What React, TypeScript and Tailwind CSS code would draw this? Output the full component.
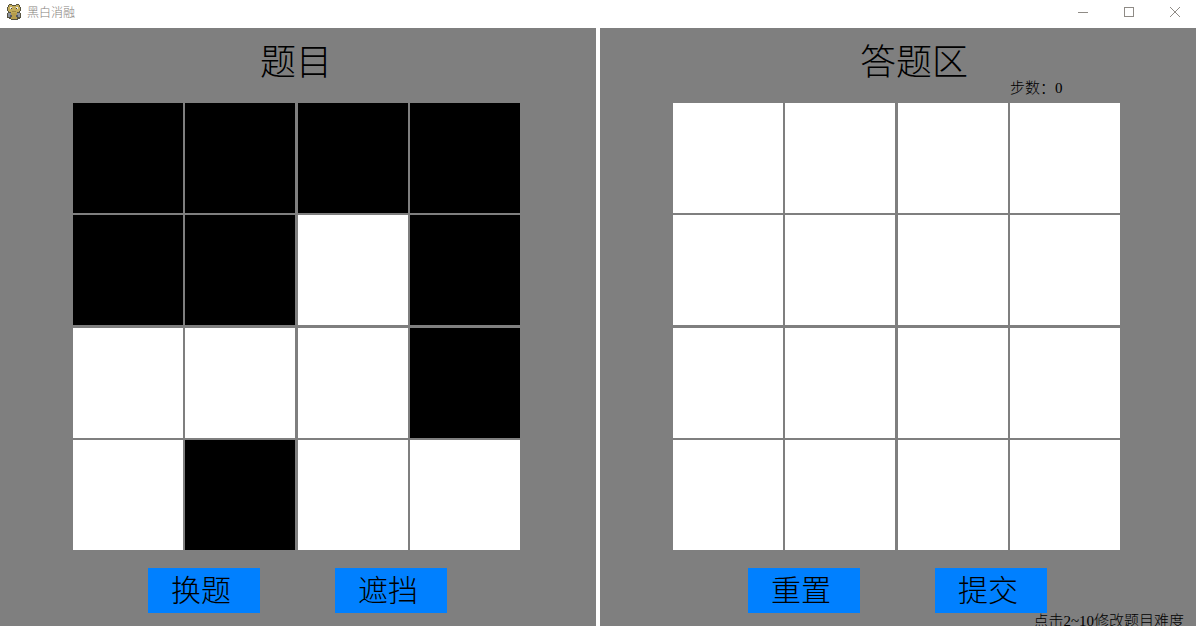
import { useState, type ReactNode } from "react";

const PUZZLE = ["1111", "1101", "0001", "0100"];
const BLANK = ["0000", "0000", "0000", "0000"];

function SnakeIcon() {
  return (
    <svg width="16" height="18" viewBox="0 0 16 18" shapeRendering="crispEdges" aria-hidden="true">
      <path d="M3 1h3v1h4V1h3v1h1v2h1v4h-1v2h1v5h-1v1h-2v1H5v-1H3v-1H1v-5h1V8H1V4h1V2h1z" fill="#56533f" />
      <path d="M3 2h3v1h4V2h3v2h1v4h-1v1h-2v1H5V9H3V8H2V4h1z" fill="#c2ab5a" />
      <path d="M5 10h6v6H5z" fill="#b59c4c" />
      <path d="M4 4h2v2H4zM10 4h2v2h-2z" fill="#ecebe6" />
      <path d="M5 5h1v1H5zM10 5h1v1h-1z" fill="#45413a" />
      <path d="M2 10h3v4H2zM11 10h3v4h-3z" fill="#8d939d" />
      <path d="M4 12h2v2H4zM10 12h2v2h-2z" fill="#555962" />
      <path d="M6 8h4v1H6z" fill="#9d8740" />
    </svg>
  );
}

function TitleBar() {
  return (
    <header className="flex h-7 shrink-0 items-start justify-between bg-white font-['Noto_Sans_CJK_SC',sans-serif]">
      <div className="flex h-6 items-center gap-[5px] pl-1.5">
        <SnakeIcon />
        <h1 className="text-xs leading-5 text-[#85817c]">黑白消融</h1>
      </div>
      <div className="flex h-6 items-center gap-9 pr-4 text-[#8f8b86]">
        <button type="button" aria-label="最小化">
          <svg width="10" height="10" viewBox="0 0 10 10" shapeRendering="crispEdges" stroke="currentColor">
            <path d="M0 5.5h10" />
          </svg>
        </button>
        <button type="button" aria-label="最大化">
          <svg width="10" height="10" viewBox="0 0 10 10" shapeRendering="crispEdges" fill="none" stroke="currentColor">
            <path d="M.5.5h9v9h-9z" />
          </svg>
        </button>
        <button type="button" aria-label="关闭">
          <svg width="10" height="10" viewBox="0 0 10 10" stroke="currentColor">
            <path d="M0 0l10 10M10 0L0 10" />
          </svg>
        </button>
      </div>
    </header>
  );
}

function Cell({ dark, label, onClick }: { dark: boolean; label: string; onClick?: () => void }) {
  const color = dark ? "bg-black" : "bg-white";
  return onClick ? (
    <button type="button" aria-label={label} onClick={onClick} className={color} />
  ) : (
    <div className={color} />
  );
}

function Board({ rows, onToggle }: { rows: string[]; onToggle?: (row: number, col: number) => void }) {
  return (
    <div className="grid h-[447px] grid-cols-[repeat(4,110px)] grid-rows-[repeat(4,110px)] content-between justify-between">
      {rows.flatMap((row, r) =>
        [...row].map((cell, c) => (
          <Cell
            key={`${r}-${c}`}
            dark={cell === "1"}
            label={`${r + 1}, ${c + 1}`}
            onClick={onToggle && (() => onToggle(r, c))}
          />
        )),
      )}
    </div>
  );
}

function ActionButton({ children, onClick }: { children: ReactNode; onClick?: () => void }) {
  return (
    <button type="button" onClick={onClick} className="h-[45px] w-28 bg-[#0080ff] pr-1.5 text-[30px] leading-[45px]">
      {children}
    </button>
  );
}

function Panel({ title, status, actions, footer, children }: {
  title: string;
  status?: string;
  actions: ReactNode;
  footer?: string;
  children: ReactNode;
}) {
  return (
    <section className="flex flex-1 flex-col bg-[#7f7f7f]">
      <div className="mx-auto w-[450px] pr-[3px]">
        <div className="flex h-[75px] flex-col pt-3">
          <h2 className="pl-[187px] text-4xl leading-[46px] font-light">{title}</h2>
          {status && <p className="-mt-1.5 pl-[337px] text-[15px] leading-4">{status}</p>}
        </div>
        {children}
        <div className="flex gap-[75px] pt-[18px] pl-[75px]">{actions}</div>
      </div>
      {footer && <p className="pr-3 text-right text-[15px] leading-4">{footer}</p>}
    </section>
  );
}

export default function App() {
  const [answer, setAnswer] = useState(BLANK);
  const [steps, setSteps] = useState(0);
  const [covered, setCovered] = useState(false);

  const toggle = (row: number, col: number) => {
    setAnswer((rows) =>
      rows.map((line, r) =>
        [...line]
          .map((cell, c) => (Math.abs(r - row) + Math.abs(c - col) <= 1 ? (cell === "1" ? "0" : "1") : cell))
          .join(""),
      ),
    );
    setSteps((n) => n + 1);
  };

  const reset = () => {
    setAnswer(BLANK);
    setSteps(0);
  };

  return (
    <div className="flex h-screen flex-col overflow-hidden bg-white font-['Liberation_Serif','Noto_Sans_CJK_SC',serif] font-light text-black">
      <TitleBar />
      <main className="flex min-h-0 flex-1 gap-1">
        <Panel
          title="题目"
          actions={
            <>
              <ActionButton>换题</ActionButton>
              <ActionButton onClick={() => setCovered((v) => !v)}>遮挡</ActionButton>
            </>
          }
        >
          <Board rows={covered ? BLANK : PUZZLE} />
        </Panel>
        <Panel
          title="答题区"
          status={`步数：${steps}`}
          footer="点击2~10修改题目难度"
          actions={
            <>
              <ActionButton onClick={reset}>重置</ActionButton>
              <ActionButton>提交</ActionButton>
            </>
          }
        >
          <Board rows={answer} onToggle={toggle} />
        </Panel>
      </main>
    </div>
  );
}
